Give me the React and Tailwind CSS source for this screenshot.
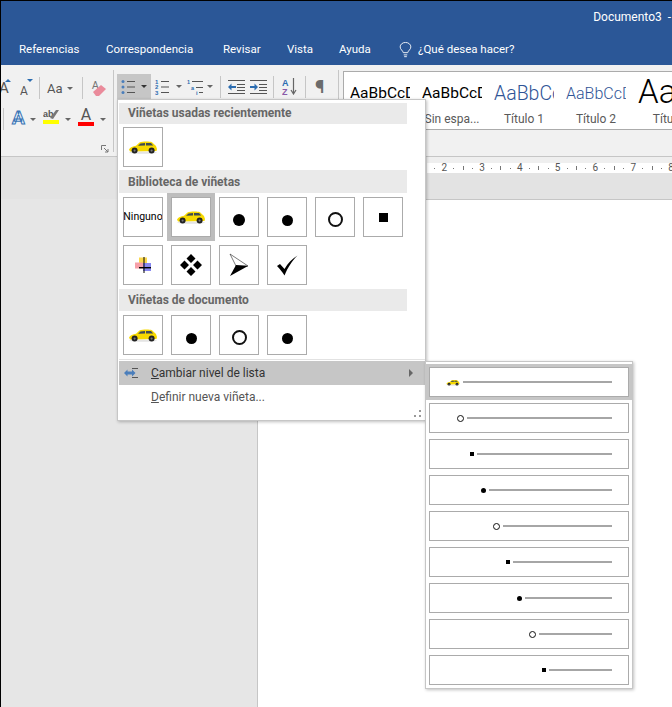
import React from "react";

const font = "font-['Roboto',sans-serif]";

function Car({ className }) {
  return (
    <svg viewBox="0 0 30 14" className={className}>
      <ellipse cx="15" cy="12.600" rx="14" ry="1.200" fill="#e4e4e4" />
      <path d="M1 9.500 C2 7 5 6.400 8 5.800 L11.500 2.600 C14 1.400 21 1.200 24 2.200 L28 6 L29 9 L28.500 11 L2 11.500 Z" fill="#f7d900" />
      <path d="M12.500 3.400 L10 5.800 L17 5.600 L17 3 Z M18 3 L18 5.600 L23 5.500 L25.300 5.600 L23 3 Z" fill="#3d4a55" />
      <circle cx="6.600" cy="10.600" r="3" fill="#222" />
      <circle cx="6.600" cy="10.600" r="1.100" fill="#777" />
      <circle cx="23.600" cy="10.600" r="3" fill="#222" />
      <circle cx="23.600" cy="10.600" r="1.100" fill="#777" />
    </svg>
  );
}

function Caret({ className = "" }) {
  return <span className={"block w-0 h-0 shrink-0 border-x-[3px] border-x-transparent border-t-[3px] border-t-[#666] " + className} />;
}

function Sep({ className = "" }) {
  return <span className={"block w-px h-[22px] bg-[#c6c6c6] shrink-0 " + className} />;
}

function ListGlyph({ marker }) {
  return (
    <svg viewBox="0 0 16 16" className="w-4 h-4 shrink-0">
      {[2.500, 8, 13.500].map((y, i) =>
        marker === "dot" ? (
          <circle key={y} cx="2" cy={y} r="1.500" fill="#4a7ebb" />
        ) : (
          <text key={y} x="0" y={y + 2} fontSize="6" fontWeight="700" fill="#2b6cb0" fontFamily="Liberation Sans">{i + 1}</text>
        )
      )}
      {[2.500, 8, 13.500].map((y) => (
        <rect key={y} x="6" y={y - 0.500} width="8" height="1" fill="#555" />
      ))}
    </svg>
  );
}

function MultiGlyph() {
  return (
    <svg viewBox="0 0 16 16" className="w-4 h-4 shrink-0">
      <text x="0" y="5" fontSize="5.500" fontWeight="700" fill="#2b6cb0" fontFamily="Liberation Sans">1</text>
      <text x="4" y="11" fontSize="5.500" fontWeight="700" fill="#2b6cb0" fontFamily="Liberation Sans">a</text>
      <text x="9" y="16" fontSize="5.500" fontWeight="700" fill="#2b6cb0" fontFamily="Liberation Sans">i</text>
      <rect x="5" y="2" width="11" height="1" fill="#555" />
      <rect x="9" y="8" width="7" height="1" fill="#555" />
      <rect x="12" y="13" width="4" height="1" fill="#555" />
    </svg>
  );
}

function IndentGlyph({ flip }) {
  return (
    <svg viewBox="0 0 17 14" className="w-[17px] h-[14px] shrink-0">
      <rect x="0" y="0" width="17" height="1" fill="#555" />
      <rect x="0" y="13" width="17" height="1" fill="#555" />
      {[4, 7, 10].map((y) => (
        <rect key={y} x="9" y={y} width="8" height="1" fill="#555" />
      ))}
      <path d={flip ? "M8 7 L4.500 3.500 V6 H0 V8 H4.500 V10.500 Z" : "M0 7 L3.500 3.500 V6 H8 V8 H3.500 V10.500 Z"} fill="#2b6cb0" />
    </svg>
  );
}

function SortGlyph() {
  return (
    <svg viewBox="0 0 16 17" className="w-4 h-[17px] shrink-0">
      <text x="0" y="8" fontSize="9" fontWeight="700" fill="#2b6cb0" fontFamily="Liberation Sans">A</text>
      <text x="0" y="17" fontSize="9" fontWeight="700" fill="#8a5aa8" fontFamily="Liberation Sans">Z</text>
      <path d="M11.500 0 V15 M9 12 L11.500 16 L14 12" stroke="#666" strokeWidth="1.200" fill="none" />
    </svg>
  );
}

function Eraser() {
  return (
    <svg viewBox="0 0 16 17" className="w-4 h-[17px] shrink-0">
      <text x="1" y="9" fontSize="10" fill="#777" fontFamily="Liberation Sans">A</text>
      <path d="M2 12 L10 5 L15 9 L8 16 L5 16 Z" fill="#ea8b9b" />
    </svg>
  );
}

function Highlighter() {
  return (
    <svg viewBox="0 0 16 16" className="w-4 h-4 shrink-0 -mt-[2px]">
      <text x="0" y="9" fontSize="9" fontWeight="700" fill="#555" fontFamily="Liberation Sans">ab</text>
      <path d="M7 10 L13 2 L16 2 L10 11 Z" fill="#777" />
      <rect x="0" y="12" width="16" height="4" fill="#ffff00" />
    </svg>
  );
}

function PictureBullet() {
  return (
    <svg viewBox="0 0 16 16" className="w-4 h-4">
      <rect x="4" y="0.500" width="8" height="8" fill="#fbd84b" />
      <rect x="0" y="5.500" width="8" height="6" fill="#f7a0a8" />
      <rect x="8" y="6" width="8" height="8" fill="#8888f0" />
      <rect x="8.500" y="0" width="1" height="16" fill="#000" />
      <rect x="4" y="10" width="12" height="1.400" fill="#000" />
    </svg>
  );
}

function Diamonds() {
  return (
    <svg viewBox="0 0 24 24" className="w-6 h-6">
      <path d="M12 1 L16.500 5.500 L12 10 L7.500 5.500 Z M5.500 7.500 L10 12 L5.500 16.500 L1 12 Z M18.500 7.500 L23 12 L18.500 16.500 L14 12 Z M12 14 L16.500 18.500 L12 23 L7.500 18.500 Z" fill="#000" />
    </svg>
  );
}

function ArrowBullet() {
  return (
    <svg viewBox="0 0 20 24" className="w-5 h-6">
      <path d="M1 1 L19 13 L7 13 Z" fill="#fff" stroke="#222" strokeWidth="0.600" />
      <path d="M19 13 L1 23 L7 12 Z" fill="#000" />
    </svg>
  );
}

function CheckBullet() {
  return (
    <svg viewBox="0 0 22 21" className="w-[22px] h-[21px]">
      <path d="M1 11 L4 9 L8.500 14 C12 8 16 4 21.500 0.500 C16 6 12 12 8.500 20.500 C6 16.500 4 14 1 11 Z" fill="#000" />
    </svg>
  );
}

const Dot = ({ className }) => <span className={"block rounded-full bg-black " + className} />;
const Ring = ({ className }) => <span className={"block rounded-full border-[#111] bg-white " + className} />;
const Square = () => <span className="block w-[4px] h-[4px] bg-black -mt-[1px]" />;

function Cell({ children, selected, className = "" }) {
  return (
    <div className={"w-10 h-10 shrink-0 border border-[#ababab] bg-white flex items-center justify-center " + (selected ? "outline-[4px] outline-[#bdbdbd] " : "") + className}>
      {children}
    </div>
  );
}

function MenuHeader({ children, className = "" }) {
  return (
    <div className={"h-[21px] w-[288px] bg-[#eaeaea] pl-[9px] flex items-center text-[12px] font-bold text-[#666] " + className}>
      {children}
    </div>
  );
}

const levels = [
  { pad: "pl-[16px]", mark: <Car className="w-[14px] h-[7px]" /> },
  { pad: "pl-[27px]", mark: <Ring className="w-[7px] h-[7px] border-[1.500px]" /> },
  { pad: "pl-[40px]", mark: <Square /> },
  { pad: "pl-[51px]", mark: <Dot className="w-[5px] h-[5px]" /> },
  { pad: "pl-[63px]", mark: <Ring className="w-[7px] h-[7px] border-[1.500px]" /> },
  { pad: "pl-[76px]", mark: <Square /> },
  { pad: "pl-[87px]", mark: <Dot className="w-[5px] h-[5px]" /> },
  { pad: "pl-[99px]", mark: <Ring className="w-[7px] h-[7px] border-[1.500px]" /> },
  { pad: "pl-[112px]", mark: <Square /> },
];

function LevelRow({ level, active }) {
  return (
    <div className={active ? "bg-[#c6c6c6] p-[3px] -m-[3px]" : ""}>
      <div className={"h-[30px] border border-[#ababab] bg-white flex items-center gap-[3px] pr-[16px] " + level.pad}>
        {level.mark}
        <span className="block flex-1 h-[2px] bg-[#a6a6a6]" />
      </div>
    </div>
  );
}

function StyleCell({ sample, label, className = "" }) {
  return (
    <div className="w-[72px] shrink-0 h-full flex flex-col items-center overflow-hidden">
      <div className={"h-[38px] w-[60px] overflow-hidden whitespace-nowrap flex items-center " + className}>{sample}</div>
      <div className="text-[12px] leading-[16px] text-[#595959] whitespace-nowrap">{label}</div>
    </div>
  );
}

export default function App() {
  return (
    <div className={"relative w-[672px] h-[707px] overflow-hidden bg-[#e6e6e6] border-t border-l border-black flex flex-col " + font}>
      {/* barra azul */}
      <div className="bg-[#2b5797] h-[64px] shrink-0 text-white text-[12px]">
        <div className="h-[32px] flex items-center justify-end">
          <span className="whitespace-pre pr-[1px]">Documento3  -</span>
        </div>
        <div className="h-[32px] flex items-center pl-[18px] pt-[2px] text-[11.500px] whitespace-nowrap">
          <span className="w-[60px]">Referencias</span>
          <span className="w-[90px] ml-[27px]">Correspondencia</span>
          <span className="w-[37px] ml-[27px]">Revisar</span>
          <span className="w-[25px] ml-[27px]">Vista</span>
          <span className="w-[34px] ml-[27px]">Ayuda</span>
          <svg viewBox="0 0 14 18" className="w-[13px] h-[16px] ml-[26px]" fill="none" stroke="#fff" strokeWidth="1">
            <path d="M4.500 12 C4 9.500 1 8.500 1 5.500 A6 5 0 0 1 13 5.500 C13 8.500 10 9.500 9.500 12 Z M5 14.500 H9 M5.500 16.500 H8.500" />
          </svg>
          <span className="ml-[6px]">¿Qué desea hacer?</span>
        </div>
      </div>

      {/* cinta */}
      <div className="bg-[#f1f1f1] h-[92px] shrink-0 border-b border-[#c6c6c6] flex">
        <div className="w-[112px] shrink-0 flex flex-col pt-[12px] gap-[7px] relative">
          <div className="flex items-center h-[22px] text-[#555]">
            <span className="text-[15px] leading-none w-[10px] -ml-[2px] shrink-0">A</span>
            <span className="block w-0 h-0 border-x-[3px] border-x-transparent border-b-[3px] border-b-[#2b6cb0] -mt-[15px] -ml-[4px]" />
            <span className="text-[12px] leading-none w-[8px] ml-[9px] mt-[5px] shrink-0">A</span>
            <span className="block w-0 h-0 border-x-[3px] border-x-transparent border-t-[3px] border-t-[#2b6cb0] -mt-[15px] -ml-[1px]" />
            <Sep className="ml-[6px]" />
            <span className="text-[13px] leading-none w-[15px] ml-[7px] whitespace-nowrap shrink-0">Aa</span>
            <Caret className="ml-[5px]" />
            <Sep className="ml-[9px]" />
            <span className="ml-[8px]"><Eraser /></span>
          </div>
          <div className="flex items-center h-[22px] text-[#555]">
            <Sep className="ml-[2px] mt-[4px]" />
            <span className="w-[13px] ml-[8px] flex justify-center text-[19px] leading-none font-bold text-[#e8f0fa] [-webkit-text-stroke:1px_#3a75b5] shrink-0">A</span>
            <Caret className="ml-[5px] mt-[4px]" />
            <span className="ml-[7px]"><Highlighter /></span>
            <Caret className="ml-[6px] mt-[4px]" />
            <div className="ml-[7px] w-[16px] flex flex-col items-center shrink-0">
              <span className="text-[16px] leading-[14px] text-[#555]">A</span>
              <span className="block w-[16px] h-[4px] bg-[#ff0000]" />
            </div>
            <Caret className="ml-[6px] mt-[4px]" />
          </div>
          <svg viewBox="0 0 8 8" className="absolute right-[4px] bottom-[3px] w-[8px] h-[8px]" fill="none" stroke="#777">
            <path d="M0.500 5 V0.500 H5 M3 3 L7 7 M7 4 V7 H4" />
          </svg>
        </div>
        <Sep className="!h-[82px] mt-[5px]" />
        <div className="w-[224px] shrink-0 pl-[3px] pt-[9px]">
          <div className="flex items-center h-[25px]">
            <div className="w-[34px] h-[25px] bg-[#c6c6c6] flex items-center pl-[4px]">
              <ListGlyph marker="dot" />
              <Caret className="ml-[4px] !border-t-[#333]" />
            </div>
            <span className="ml-[4px]"><ListGlyph marker="num" /></span>
            <Caret className="ml-[5px]" />
            <span className="ml-[5px]"><MultiGlyph /></span>
            <Caret className="ml-[4px]" />
            <Sep className="ml-[7px]" />
            <span className="ml-[7px]"><IndentGlyph /></span>
            <span className="ml-[5px]"><IndentGlyph flip /></span>
            <Sep className="ml-[6px]" />
            <span className="ml-[8px]"><SortGlyph /></span>
            <Sep className="ml-[7px]" />
            <span className="ml-[9px] text-[19px] leading-none text-[#6b6b6b] font-bold">¶</span>
          </div>
        </div>
        <Sep className="!h-[82px] mt-[5px]" />
        <div className="flex-1 min-w-0 pl-[4px] pt-[6px]">
          <div className="h-[59px] -mr-[10px] border border-[#ababab] bg-white flex pt-[1px]">
            <StyleCell className="pt-[3px]" sample={<span className="text-[15.500px] text-black">AaBbCcDd</span>} label="" />
            <StyleCell className="pt-[3px]" sample={<span className="text-[15.500px] text-black">AaBbCcDd</span>} label="Sin espa..." />
            <StyleCell className="pt-[3px]" sample={<span className="text-[19.500px] font-light text-[#2f5496]">AaBbCcDd</span>} label="Título 1" />
            <StyleCell className="pt-[3px]" sample={<span className="text-[16px] font-light text-[#2f5496]">AaBbCcDd</span>} label="Título 2" />
            <StyleCell sample={<span className="text-[33px] font-light text-black">AaB</span>} label="Título" />
          </div>
        </div>
      </div>

      {/* regla */}
      <div className="h-[42px] shrink-0 bg-[#e3e3e3] pl-[426px]">
        <div className="h-[6px] bg-[#efefef]" />
        <div className="h-[10px] bg-white flex items-center pl-[3px] text-[10px] leading-none text-[#555] whitespace-nowrap overflow-hidden">
          <span className="w-[9.500px] shrink-0 flex justify-center"><span className="block w-px h-px bg-[#777]" /></span>
          {[2, 3, 4, 5, 6, 7, 8].map((n) => (
            <div key={n} className="w-[37.800px] shrink-0 grid grid-cols-4 items-center justify-items-center">
              <span>{n}</span>
              <span className="block w-px h-px bg-[#777]" />
              <span className="block w-px h-[4px] bg-[#777]" />
              <span className="block w-px h-px bg-[#777]" />
            </div>
          ))}
        </div>
      </div>

      {/* documento */}
      <div className="flex-1 flex">
        <div className="w-[256px] shrink-0" />
        <div className="flex-1 bg-white border-l border-t border-[#c6c6c6]" />
      </div>

      {/* menu de viñetas */}
      <div className="absolute left-[116px] top-[98px] w-[309px] h-[322px] bg-white border border-[#c6c6c6] shadow-[1px_1px_3px_rgba(0,0,0,0.25)] pt-[3px] pl-[1px] text-[12px] text-[#444]">
        <MenuHeader className="pb-[2px]">Viñetas usadas recientemente</MenuHeader>
        <div className="pl-[4px] pt-[3px] pb-[3px]">
          <Cell><Car className="w-[30px] h-[14px]" /></Cell>
        </div>
        <MenuHeader className="!h-[23px]">Biblioteca de viñetas</MenuHeader>
        <div className="pl-[4px] pt-[4px] pb-[4px] flex flex-col gap-2">
          <div className="flex gap-2">
            <Cell className="text-[10.500px] text-black overflow-hidden">Ninguno</Cell>
            <Cell selected><Car className="w-[30px] h-[14px]" /></Cell>
            <Cell className="pt-[6px]"><Dot className="w-[12px] h-[12px]" /></Cell>
            <Cell className="pt-[6px]"><Dot className="w-[11px] h-[11px]" /></Cell>
            <Cell className="pt-[4px]"><Ring className="w-[15px] h-[15px] border-2" /></Cell>
            <Cell><span className="block w-[9px] h-[9px] bg-black" /></Cell>
          </div>
          <div className="flex gap-2">
            <Cell><PictureBullet /></Cell>
            <Cell><Diamonds /></Cell>
            <Cell><ArrowBullet /></Cell>
            <Cell><CheckBullet /></Cell>
          </div>
        </div>
        <MenuHeader className="!h-[22px]">Viñetas de documento</MenuHeader>
        <div className="pl-[4px] pt-[4px] flex gap-2">
          <Cell><Car className="w-[30px] h-[14px]" /></Cell>
          <Cell className="pt-[6px]"><Dot className="w-[11px] h-[11px]" /></Cell>
          <Cell className="pt-[4px]"><Ring className="w-[15px] h-[15px] border-2" /></Cell>
          <Cell className="pt-[6px]"><Dot className="w-[11px] h-[11px]" /></Cell>
        </div>
        <div className="mt-[4px] h-px bg-[#e2e2e2]" />
        <div className="mt-[1px] h-[24px] bg-[#c6c6c6] flex items-center text-[#333] relative">
          <svg viewBox="0 0 14 10" className="w-[14px] h-[10px] ml-[5px]">
            <path d="M0 5 L3.500 1.500 V3.500 H8 V1.500 L11.500 5 L8 8.500 V6.500 H3.500 V8.500 Z" fill="#4a7ebb" />
            <rect x="8" y="0" width="6" height="1" fill="#555" />
            <rect x="8" y="9" width="6" height="1" fill="#555" />
          </svg>
          <span className="ml-[13px]"><u>C</u>ambiar nivel de lista</span>
          <span className="absolute right-[12px] block w-0 h-0 border-y-[4px] border-y-transparent border-l-[4px] border-l-[#666]" />
        </div>
        <div className="h-[24px] flex items-center pl-[32px] text-[#555]"><span><u>D</u>efinir nueva viñeta...</span></div>
        <svg viewBox="0 0 7 7" className="absolute right-[4px] bottom-[3px] w-[7px] h-[7px]" fill="#999">
          <rect x="5" y="0" width="2" height="2" />
          <rect x="0" y="5" width="2" height="2" />
          <rect x="5" y="5" width="2" height="2" />
        </svg>
      </div>

      {/* submenu de niveles */}
      <div className="absolute left-[424px] top-[360px] w-[208px] h-[328px] bg-white border border-[#c6c6c6] shadow-[1px_1px_3px_rgba(0,0,0,0.25)] px-[3px] pt-[5px] flex flex-col gap-[6px]">
        {levels.map((level, i) => (
          <LevelRow key={level.pad} level={level} active={i === 0} />
        ))}
      </div>
    </div>
  );
}
